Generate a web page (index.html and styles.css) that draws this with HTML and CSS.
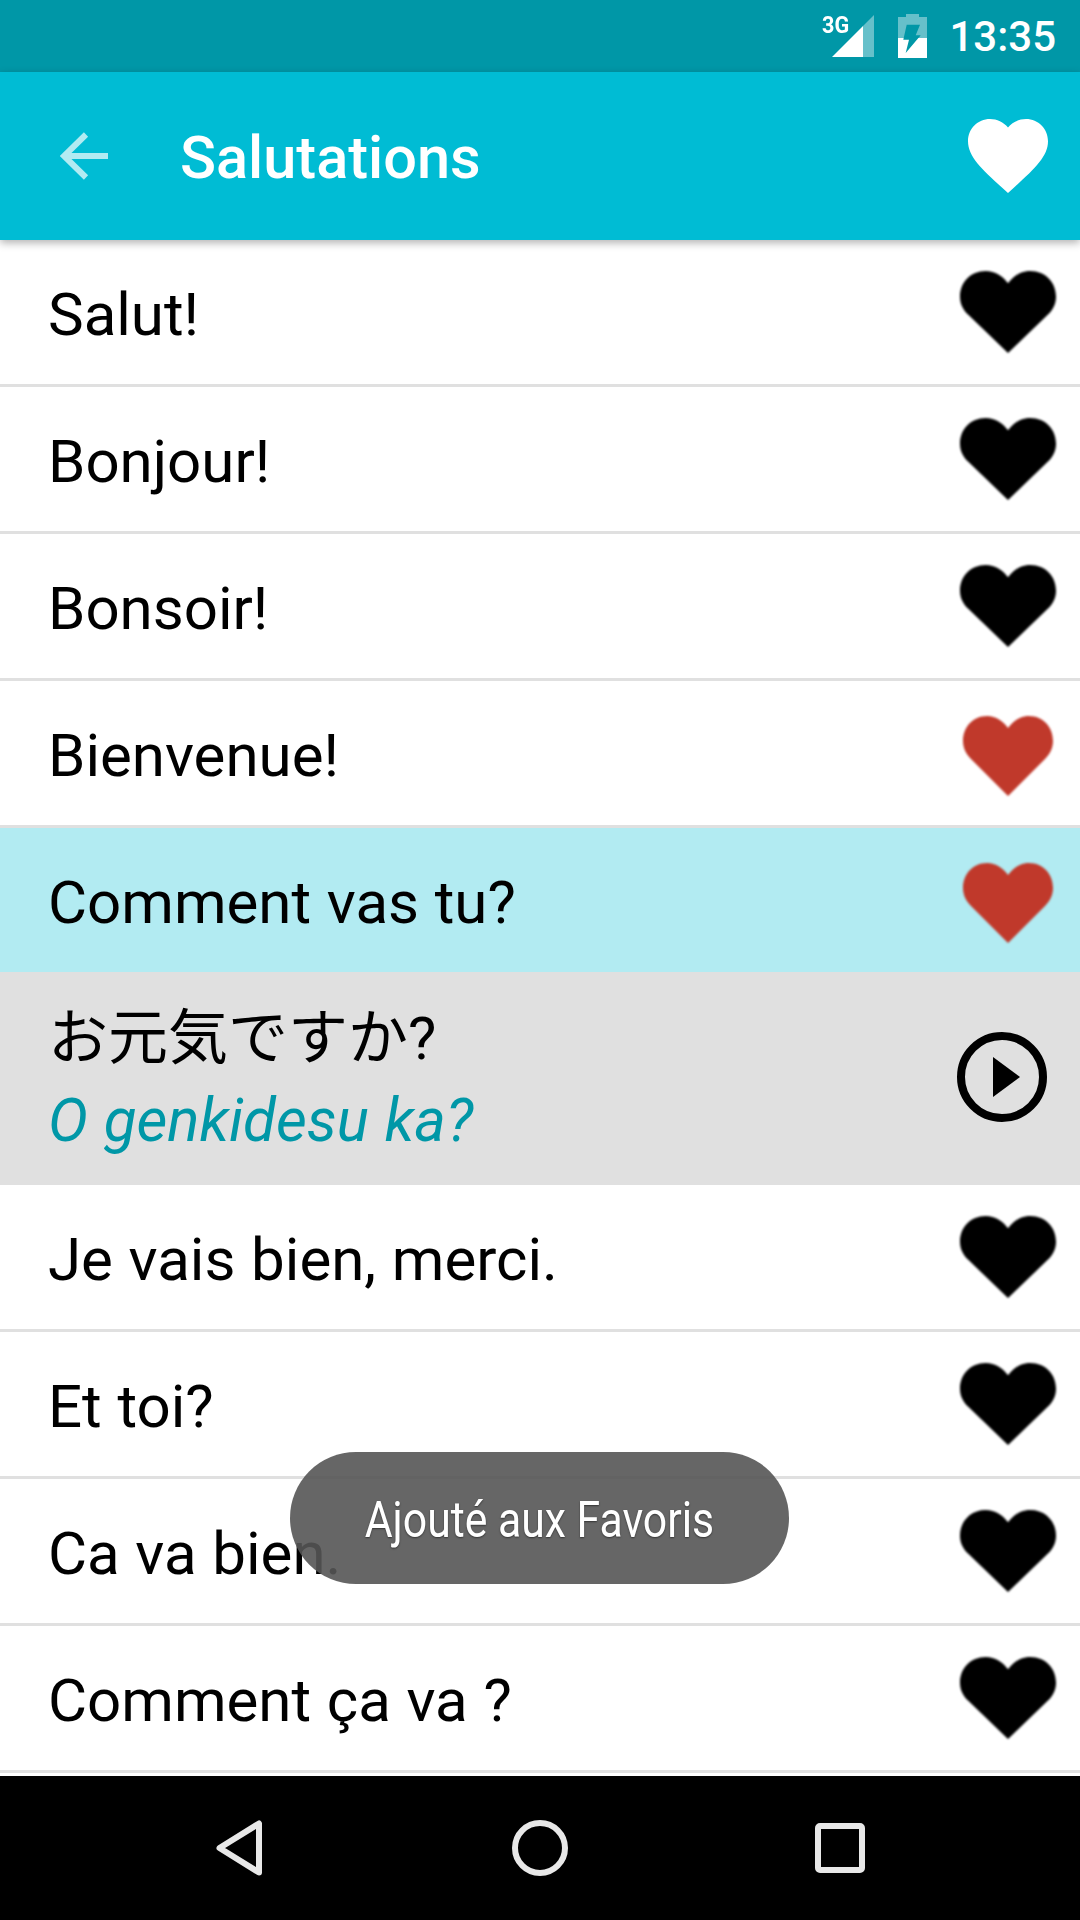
FILE: index.html
```html
<!DOCTYPE html>
<html lang="fr">
<head>
<meta charset="utf-8">
<title>Salutations</title>
<link rel="stylesheet" href="styles.css">
</head>
<body>
<svg class="defs" width="0" height="0" aria-hidden="true">
  <symbol id="heart-fav" viewBox="2 3 20 18.35" preserveAspectRatio="none">
    <path d="M12 21.35l-1.45-1.32C5.4 15.36 2 12.28 2 8.5 2 5.42 4.42 3 7.5 3c1.74 0 3.41.81 4.5 2.09C13.09 3.81 14.76 3 16.5 3 19.58 3 22 5.42 22 8.5c0 3.78-3.4 6.86-8.55 11.54L12 21.35z"/>
  </symbol>
  <symbol id="heart" viewBox="0 0 90 80" preserveAspectRatio="none">
    <path d="M45 80L8 43C3 38 0 32 0 25C0 11 10 0 24 0C33 0 40 5 45 12C50 5 57 0 66 0C80 0 90 11 90 25C90 32 87 38 82 43Z"/>
  </symbol>
</svg>
<div class="screen">
  <header class="status">
    <div class="signal">
      <span class="net">3G</span>
      <svg class="signal-icon" viewBox="0 0 42 42"><path class="dim" d="M42 0V42H31V11z"/><path class="solid" d="M0 42L31 11V42z"/></svg>
    </div>
    <svg class="battery" viewBox="0 0 29 44">
      <path class="dim" d="M8 0H21V3H29V24H0V3H8z"/>
      <path class="solid" d="M0 24H29V44H0z"/>
      <path class="bolt" d="M8.700 10.700H22L17.700 21.300H22.700L7.700 39L11 25.700H5.300z"/>
    </svg>
    <span class="time">13:35</span>
  </header>
  <div class="appbar">
    <svg class="back" viewBox="0 0 48 48"><path d="M48 24H5M26 2.500L4 24L26 45.500"/></svg>
    <h1 class="title">Salutations</h1>
    <svg class="fav"><use href="#heart-fav"/></svg>
  </div>
  <main class="list">
    <div class="row"><span class="label">Salut!</span><svg class="heart"><use href="#heart"/></svg></div>
    <div class="row"><span class="label">Bonjour!</span><svg class="heart"><use href="#heart"/></svg></div>
    <div class="row"><span class="label">Bonsoir!</span><svg class="heart"><use href="#heart"/></svg></div>
    <div class="row"><span class="label">Bienvenue!</span><svg class="heart red"><use href="#heart"/></svg></div>
    <div class="row active"><span class="label">Comment vas tu?</span><svg class="heart red"><use href="#heart"/></svg></div>
    <div class="detail">
      <div class="detail-text">
        <span class="jp">お元気ですか?</span>
        <span class="romaji">O genkidesu ka?</span>
      </div>
      <svg class="play" viewBox="0 0 90 90"><circle cx="45" cy="45" r="41"/><path d="M36 25L63 45L36 65z"/></svg>
    </div>
    <div class="row"><span class="label">Je vais bien, merci.</span><svg class="heart"><use href="#heart"/></svg></div>
    <div class="row"><span class="label">Et toi?</span><svg class="heart"><use href="#heart"/></svg></div>
    <div class="row"><span class="label">Ca va bien.</span><svg class="heart"><use href="#heart"/></svg></div>
    <div class="row"><span class="label">Comment ça va ?</span><svg class="heart"><use href="#heart"/></svg></div>
  </main>
  <nav class="navbar">
    <svg class="nav-back" viewBox="0 0 47 56"><path d="M43 3.500V52.500L3.500 28z"/></svg>
    <svg class="nav-home" viewBox="0 0 56 56"><circle cx="28" cy="28" r="25"/></svg>
    <svg class="nav-recent" viewBox="0 0 50 50"><rect x="3" y="3" width="44" height="44" rx="2"/></svg>
  </nav>
  <div class="toast"><span class="toast-text">Ajouté aux Favoris</span></div>
</div>
</body>
</html>
```

FILE: styles.css
```css
* { box-sizing: border-box; }
html, body { margin: 0; padding: 0; }
body { width: 1080px; height: 1920px; overflow: hidden; background: #fff; font-family: Roboto, "Noto Sans CJK JP", sans-serif; color: #000; }
.defs { position: absolute; }
.screen { position: relative; width: 1080px; height: 1920px; display: flex; flex-direction: column; }

.status { height: 72px; flex: none; background: #0097a7; display: flex; align-items: flex-start; color: #fff; padding-right: 24px; justify-content: flex-end; }
.signal { position: relative; width: 52px; height: 42px; margin-top: 15px; margin-right: 24px; display: flex; justify-content: flex-end; }
.net { position: absolute; left: 0; top: -2px; font-size: 24px; line-height: 24px; font-weight: 700; transform: scaleX(.9); transform-origin: left; }
.signal-icon { width: 42px; height: 42px; }
.battery { width: 29px; height: 44px; margin-top: 14px; margin-right: 22px; }
.dim { fill: rgba(255,255,255,.4); }
.solid { fill: #fff; }
.bolt { fill: #0097a7; }
.time { font-size: 42px; line-height: 74px; font-weight: 500; height: 72px; }

.appbar { height: 168px; flex: none; background: #00bcd4; display: flex; align-items: center; position: relative; z-index: 1; box-shadow: 0 3px 8px rgba(0,0,0,.3); padding-left: 60px; }
.back { width: 48px; height: 48px; fill: none; stroke: #b2ebf2; stroke-width: 6; }
.title { margin: 6px 0 0 72px; font-size: 59.500px; font-weight: 500; color: #fff; line-height: 1; flex: 1; }
.fav { width: 80px; height: 74px; fill: #fff; margin-right: 32px; }

.list { flex: 1; display: flex; flex-direction: column; min-height: 0; }
.row { height: 147px; flex: none; display: flex; align-items: center; justify-content: space-between; border-bottom: 3px solid #e0e0e0; padding: 0 24px 0 48px; }
.label { font-size: 60px; line-height: 1; margin-top: 5px; word-spacing: .8px; }
.heart { width: 96px; height: 82px; fill: #000; filter: blur(1px); }
.heart.red { width: 90px; height: 80px; fill: #c0392b; margin-right: 3px; margin-top: 6px; }
.active { height: 144px; background: #b2ebf2; border-bottom: 0; }
.detail { height: 213px; flex: none; background: #e0e0e0; display: flex; align-items: center; justify-content: space-between; padding: 0 33px 0 48px; }
.detail-text { display: flex; flex-direction: column; gap: 22px; margin-top: 2px; }
.jp { font-size: 60px; line-height: 60px; }
.romaji { font-size: 60px; line-height: 60px; font-style: italic; color: #0097a7; word-spacing: 1px; }
.play { width: 90px; height: 90px; margin-top: -4px; }
.play circle { fill: none; stroke: #000; stroke-width: 8; }
.play path { fill: #000; }

.navbar { height: 144px; flex: none; background: #000; display: flex; align-items: center; padding-left: 216px; }
.navbar svg { fill: none; stroke: #e8e8e8; stroke-width: 6; stroke-linejoin: round; margin-top: -1px; }
.nav-back { width: 47px; height: 56px; }
.nav-home { width: 56px; height: 56px; margin-left: 249px; }
.nav-recent { width: 50px; height: 50px; margin-left: 247px; }

.toast { position: absolute; left: 290px; top: 1452px; width: 499px; height: 132px; border-radius: 66px; background: rgba(85,85,85,.9); display: flex; align-items: center; justify-content: center; }
.toast-text { color: #fff; font-size: 50px; line-height: 1; transform: scaleX(.855); white-space: nowrap; margin-top: 3px; text-shadow: 0 1px 2px rgba(0,0,0,.5); }
```
